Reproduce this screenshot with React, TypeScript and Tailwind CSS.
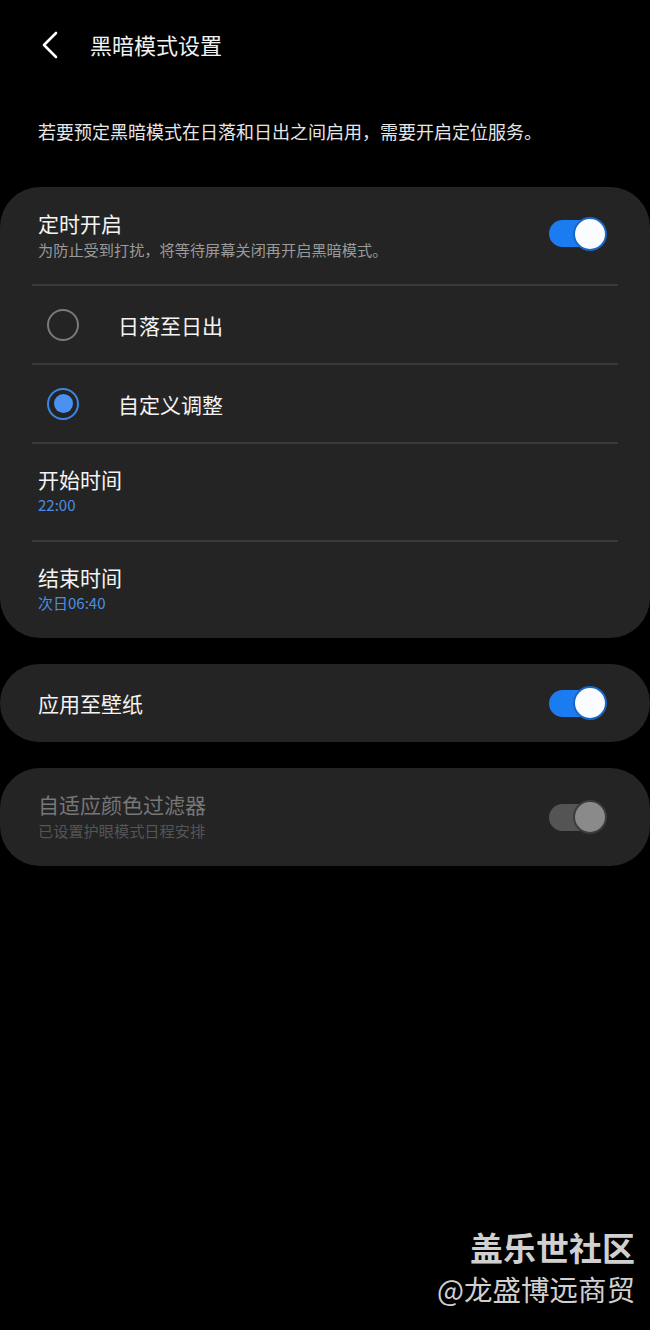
const font = { fontFamily: '"Noto Sans CJK SC", "Noto Sans", sans-serif' };

function Toggle({ on }: { on: boolean }) {
    return (
        <div className="relative w-[58px] h-[34px] shrink-0">
            <div className={`absolute left-0 top-[3.5px] w-[54px] h-[27px] rounded-full ${on ? "bg-[#1b7cf0]" : "bg-[#545454]"}`}></div>
            <div className={`absolute right-0 top-0 w-[34px] h-[34px] rounded-full border-2 ${on ? "bg-[#fbfcff] border-[#1a66c4]" : "bg-[#8a8a8a] border-[#3c3c3c]"}`}></div>
        </div>
    );
}

function Radio({ checked }: { checked: boolean }) {
    return checked ? (
        <div className="w-[32px] h-[32px] rounded-full border-2 border-[#3d86e6] flex items-center justify-center shrink-0">
            <div className="w-[19px] h-[19px] rounded-full bg-[#4a91f2]"></div>
        </div>
    ) : (
        <div className="w-[32px] h-[32px] rounded-full border-2 border-[#7a7a7a] shrink-0"></div>
    );
}

function Divider() {
    return <div className="mx-[32px] h-[2px] bg-[#393939]"></div>;
}

export default function App() {
    return (
        <div className="w-[650px] h-[1330px] bg-black flex flex-col" style={font}>
            {/* Шапка */}
            <div className="h-[90px] flex flex-row items-center">
                <svg className="ml-[40px] w-[20px] h-[28px]" viewBox="0 0 20 28" fill="none">
                    <polyline points="16,2 4,14 16,26" stroke="#ffffff" strokeWidth="2.6" strokeLinecap="round" strokeLinejoin="round" />
                </svg>
                <span className="ml-[30px] mt-[-2px] text-[22px] leading-[28px] text-[#f2f2f2]">黑暗模式设置</span>
            </div>

            {/* Описание */}
            <p className="mt-[29px] px-[38px] text-[18px] leading-[24px] text-[#e6e6e6]">若要预定黑暗模式在日落和日出之间启用，需要开启定位服务。</p>

            {/* Карточка расписания */}
            <div className="mt-[44px] bg-[#242424] rounded-[40px] flex flex-col">
                <div className="h-[97px] px-[38px] flex flex-row items-center justify-between">
                    <div className="flex flex-col">
                        <span className="text-[21px] leading-[26px] text-[#f4f4f4]">定时开启</span>
                        <span className="text-[15.2px] leading-[26px] text-[#9a9a9a]">为防止受到打扰，将等待屏幕关闭再开启黑暗模式。</span>
                    </div>
                    <div className="mr-[5px] mt-[-4px]">
                        <Toggle on={true} />
                    </div>
                </div>
                <Divider />
                <div className="h-[77px] pl-[47px] flex flex-row items-center gap-[39px]">
                    <Radio checked={false} />
                    <span className="text-[21px] leading-[26px] text-[#f4f4f4]">日落至日出</span>
                </div>
                <Divider />
                <div className="h-[77px] pl-[47px] flex flex-row items-center gap-[39px]">
                    <Radio checked={true} />
                    <span className="text-[21px] leading-[26px] text-[#f4f4f4]">自定义调整</span>
                </div>
                <Divider />
                <div className="h-[96px] px-[38px] flex flex-col justify-center">
                    <span className="text-[21px] leading-[26px] text-[#f4f4f4]">开始时间</span>
                    <span className="text-[15px] leading-[26px] text-[#4b8ee0]">22:00</span>
                </div>
                <Divider />
                <div className="h-[96px] px-[38px] flex flex-col justify-center">
                    <span className="text-[21px] leading-[26px] text-[#f4f4f4]">结束时间</span>
                    <span className="text-[15px] leading-[26px] text-[#4b8ee0]">次日06:40</span>
                </div>
            </div>

            {/* Обои */}
            <div className="mt-[26px] h-[78px] bg-[#242424] rounded-[40px] px-[38px] flex flex-row items-center justify-between">
                <span className="text-[21px] leading-[26px] text-[#f4f4f4]">应用至壁纸</span>
                <div className="mr-[5px]">
                    <Toggle on={true} />
                </div>
            </div>

            {/* Фильтр (неактивен) */}
            <div className="mt-[26px] h-[98px] bg-[#242424] rounded-[40px] px-[38px] flex flex-row items-center justify-between">
                <div className="flex flex-col">
                    <span className="text-[21px] leading-[26px] text-[#777777]">自适应颜色过滤器</span>
                    <span className="text-[15.2px] leading-[26px] text-[#555555]">已设置护眼模式日程安排</span>
                </div>
                <div className="mr-[5px]">
                    <Toggle on={false} />
                </div>
            </div>

            {/* Водяной знак */}
            <div className="mt-auto pb-[20px] pr-[15px] flex flex-col items-end">
                <span className="text-[33px] leading-[42px] font-bold text-[#d0d0d0]">盖乐世社区</span>
                <span className="text-[28.5px] leading-[42px] text-[#d0d0d0]">@龙盛博远商贸</span>
            </div>
        </div>
    );
}
